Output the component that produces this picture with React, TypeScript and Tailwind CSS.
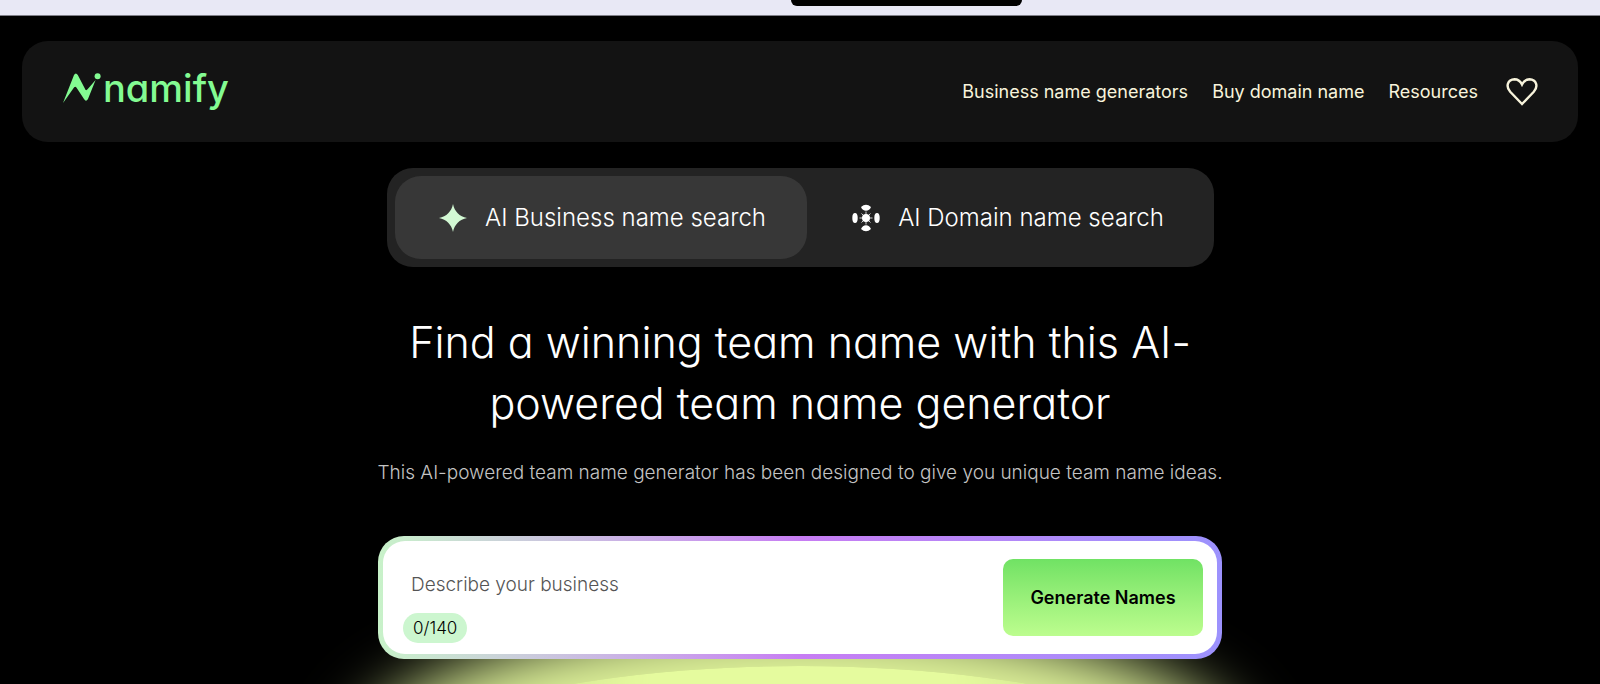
import { useState } from "react";

const MAX_LENGTH = 140;

const navLinks = [
  { label: "Business name generators", href: "#generators" },
  { label: "Buy domain name", href: "#domains" },
  { label: "Resources", href: "#resources" },
];

function LogoMark() {
  return (
    <svg viewBox="0 0 40 32" className="h-8 w-10" fill="#83fb92" aria-hidden="true">
      <path d="M0 31 L11 3 Q12.8 0 14.8 3 L22.6 18 Q23.6 18.6 24.8 17 L32.6 8 L25 27 Q23 30.5 21 27 L13.4 15.5 Q12.2 14 11 15.5 Z" />
      <circle cx="34.6" cy="4.2" r="3" />
    </svg>
  );
}

function HeartIcon() {
  return (
    <svg viewBox="0 0 32 30" className="h-[30px] w-8" fill="none" stroke="#f8f4dc" strokeWidth="2.4" aria-hidden="true">
      <path d="M16 27 L4.2 14.8 C-0.5 9.500 1.500 2.500 8.5 2.2 C12 2.2 14.500 4.500 16 7.5 C17.5 4.500 20 2.2 23.5 2.2 C30.5 2.500 32.500 9.500 27.8 14.8 Z" />
    </svg>
  );
}

function SparkIcon() {
  return (
    <svg viewBox="0 0 28 28" className="size-7" fill="#d3f9d4" aria-hidden="true">
      <path d="M14 0 C15.5 7.5 20.5 12.5 28 14 C20.5 15.5 15.5 20.5 14 28 C12.5 20.5 7.5 15.5 0 14 C7.5 12.5 12.5 7.5 14 0 Z" />
    </svg>
  );
}

function DomainIcon() {
  return (
    <svg viewBox="0 0 28 28" className="size-7" fill="#fff" aria-hidden="true">
      <path d="M9 3 Q14 -1.5 19 3 Q17.5 6.8 14 6.8 Q10.5 6.8 9 3Z M9 25 Q14 29.5 19 25 Q17.5 21.2 14 21.2 Q10.5 21.2 9 25Z" />
      <ellipse cx="3" cy="14" rx="2.7" ry="5" />
      <ellipse cx="25" cy="14" rx="2.7" ry="5" />
      <circle cx="14" cy="14" r="4" />
      <path
        d="M14 7.5V20.5M7.5 14H20.5M9.5 9.5L18.5 18.5M18.5 9.5L9.5 18.5"
        stroke="#fff"
        strokeWidth="0.8"
      />
    </svg>
  );
}

const tabs = [
  { id: "business", label: "AI Business name search", icon: <SparkIcon /> },
  { id: "domain", label: "AI Domain name search", icon: <DomainIcon /> },
];

export default function App() {
  const [activeTab, setActiveTab] = useState("business");
  const [text, setText] = useState("");

  return (
    <div className="flex min-h-screen flex-col overflow-hidden bg-black font-['Inter',sans-serif]">
      {/* bottom edge of the promo bar */}
      <div className="flex h-4 items-start justify-center border-b border-[#7f7f88] bg-[#e8e8f5] pl-[212px]">
        <div className="h-[6px] w-[231px] rounded-b-md bg-black" />
      </div>

      <header className="mx-[22px] mt-[25px] flex h-[101px] items-center justify-between rounded-[26px] bg-[#131313] pr-10 pl-[41px]">
        <a href="#home" className="flex items-center pb-2 text-[#83fb92]">
          <LogoMark />
          <span className="text-[38px] leading-10 font-medium [font-feature-settings:'cv11']">namify</span>
        </a>
        <nav className="flex items-center gap-6 text-lg text-[#f8f4dc]">
          {navLinks.map((link) => (
            <a key={link.label} href={link.href}>
              {link.label}
            </a>
          ))}
          <button type="button" aria-label="Favourites" className="ml-1">
            <HeartIcon />
          </button>
        </nav>
      </header>

      <main className="flex flex-1 flex-col items-center pt-[26px]">
        <div className="grid w-full max-w-[827px] grid-cols-[412fr_399fr] rounded-[26px] bg-[#232323] p-2">
          {tabs.map((tab) => (
            <button
              key={tab.id}
              type="button"
              onClick={() => setActiveTab(tab.id)}
              className={`flex h-[83px] items-center justify-center gap-[18px] rounded-[26px] pl-1 text-2xl font-light text-white ${
                activeTab === tab.id ? "bg-[#373737]" : ""
              }`}
            >
              {tab.icon}
              {tab.label}
            </button>
          ))}
        </div>

        <h1 className="mt-[45px] max-w-[827px] text-center text-[43px] leading-[61px] font-light text-white [font-feature-settings:'cv11']">
          Find a winning team name with this AI-powered team name generator
        </h1>
        <p className="mt-6 text-[19px] leading-[30px] font-light text-[#c4c4c4]">
          This AI-powered team name generator has been designed to give you unique team name ideas.
        </p>

        <div className="relative mt-12 w-full max-w-[844px]">
          {/* glow behind the search box */}
          <div className="absolute top-20 left-1/2 h-[300px] w-[890px] -translate-x-1/2 rounded-[50%] bg-[#dff39a] blur-[32px]" />
          <div className="absolute top-[130px] left-1/2 h-[300px] w-[960px] -translate-x-1/2 rounded-[50%] bg-[#e5fb9e] [mask-image:linear-gradient(to_right,transparent_20%,black_35%,black_65%,transparent_80%)]" />
          <form
            onSubmit={(e) => e.preventDefault()}
            className="relative rounded-[26px] bg-linear-to-r from-[#c8f2c9] via-[#c77df3] to-[#9c92fd] p-[5px]"
          >
            <div className="flex h-[113px] items-center justify-between rounded-[22px] bg-white pr-[14px] pl-5">
              <div className="flex flex-1 flex-col items-start gap-2 pt-3">
                <input
                  type="text"
                  aria-label="Describe your business"
                  placeholder="Describe your business"
                  maxLength={MAX_LENGTH}
                  value={text}
                  onChange={(e) => setText(e.target.value)}
                  className="h-10 w-full px-2 text-[19px] font-light text-black outline-none placeholder:text-[#555]"
                />
                <span className="rounded-full bg-[#ccf6cf] px-[10px] text-[17px] leading-[30px] font-light text-black">
                  {text.length}/{MAX_LENGTH}
                </span>
              </div>
              <button
                type="submit"
                className="h-[77px] w-[200px] rounded-[10px] bg-linear-to-b from-[#70e264] to-[#bcfd8e] text-lg font-semibold text-black"
              >
                Generate Names
              </button>
            </div>
          </form>
        </div>
      </main>
    </div>
  );
}
